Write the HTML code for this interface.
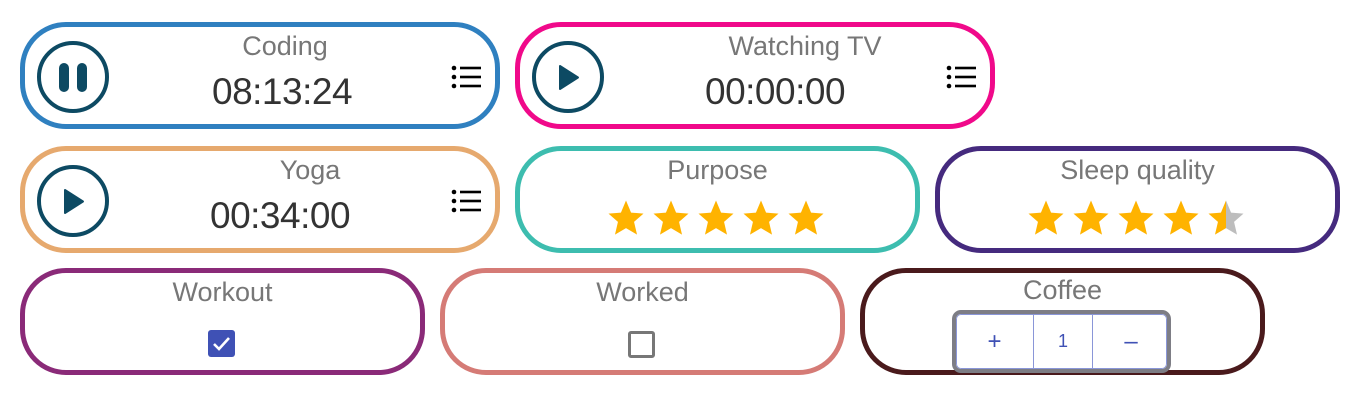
<!DOCTYPE html>
<html><head><style>
body{margin:0;width:1364px;height:412px;background:#fff;font-family:"Liberation Sans",sans-serif;position:relative;overflow:hidden}
.c{position:absolute;box-sizing:border-box;border:5px solid;border-radius:46px;height:107px}
.t{position:absolute;left:0;right:0;text-align:center;font-size:27px;color:#777;font-weight:300;top:4px}
.tm{position:absolute;font-size:37px;color:#333;top:44px;letter-spacing:-0.5px}
.btn{position:absolute;left:12px;top:14px;width:72px;height:72px;box-sizing:border-box;border:4px solid #0d4a63;border-radius:50%}
.li{position:absolute;right:13px;top:38px}
.st{position:absolute;left:0;right:0;top:46px;text-align:center}
</style></head><body>
<svg width="0" height="0" style="position:absolute"><defs>
<symbol id="star" viewBox="0 0 24 24"><path d="M12 2l2.9 6.9 7.1.6-5.4 4.7 1.7 7.3L12 17.8 5.7 21.5l1.7-7.3L2 9.5l7.1-.6z"/></symbol>
<symbol id="list" viewBox="0 0 30 24"><circle cx="3" cy="3" r="2.3"/><circle cx="3" cy="12" r="2.3"/><circle cx="3" cy="21" r="2.3"/><rect x="9" y="1.7" width="21" height="2.6"/><rect x="9" y="10.7" width="21" height="2.6"/><rect x="9" y="19.7" width="21" height="2.6"/></symbol>
<linearGradient id="hg" x1="0" x2="1" y1="0" y2="0"><stop offset="0.5" stop-color="#ffb300"/><stop offset="0.5" stop-color="#bdbdbd"/></linearGradient>
</defs></svg>

<div class="c" style="left:20px;top:22px;width:480px;border-color:#2f80c0">
 <div class="btn"><div style="position:absolute;left:18px;top:18px;width:10px;height:29px;background:#0d4a63;border-radius:5px"></div><div style="position:absolute;left:36px;top:18px;width:10px;height:29px;background:#0d4a63;border-radius:5px"></div></div>
 <div class="t" style="left:155px;right:0;width:210px;text-align:center">Coding</div>
 <div class="tm" style="left:187px">08:13:24</div>
 <svg class="li" width="32" height="24"><use href="#list"/></svg>
</div>

<div class="c" style="left:515px;top:22px;width:480px;border-color:#f0098a">
 <div class="btn"><svg style="position:absolute;left:22px;top:19px" width="22" height="27"><path d="M2 2L20 13.5 2 25z" fill="#0d4a63" stroke="#0d4a63" stroke-width="2" stroke-linejoin="round"/></svg></div>
 <div class="t" style="left:155px;width:260px">Watching TV</div>
 <div class="tm" style="left:185px">00:00:00</div>
 <svg class="li" width="32" height="24"><use href="#list"/></svg>
</div>

<div class="c" style="left:20px;top:146px;width:480px;border-color:#e6a96e">
 <div class="btn"><svg style="position:absolute;left:22px;top:19px" width="22" height="27"><path d="M2 2L20 13.5 2 25z" fill="#0d4a63" stroke="#0d4a63" stroke-width="2" stroke-linejoin="round"/></svg></div>
 <div class="t" style="left:155px;width:260px">Yoga</div>
 <div class="tm" style="left:185px">00:34:00</div>
 <svg class="li" width="32" height="24"><use href="#list"/></svg>
</div>

<div class="c" style="left:515px;top:146px;width:405px;border-color:#3dbdaf">
 <div class="t">Purpose</div>
 <div class="st"><svg width="225" height="42" fill="#ffb300"><use href="#star" x="0" width="42" height="42"/><use href="#star" x="45" width="42" height="42"/><use href="#star" x="90" width="42" height="42"/><use href="#star" x="135" width="42" height="42"/><use href="#star" x="180" width="42" height="42"/></svg></div>
</div>

<div class="c" style="left:935px;top:146px;width:405px;border-color:#452a7e">
 <div class="t">Sleep quality</div>
 <div class="st"><svg width="225" height="42"><g fill="#ffb300"><use href="#star" x="0" width="42" height="42"/><use href="#star" x="45" width="42" height="42"/><use href="#star" x="90" width="42" height="42"/><use href="#star" x="135" width="42" height="42"/></g><svg x="180" width="42" height="42" viewBox="0 0 24 24"><path d="M12 2l2.9 6.9 7.1.6-5.4 4.7 1.7 7.3L12 17.8 5.7 21.5l1.7-7.3L2 9.5l7.1-.6z" fill="url(#hg)"/></svg></svg></div>
</div>

<div class="c" style="left:20px;top:268px;width:405px;border-color:#8a2a78">
 <div class="t">Workout</div>
 <div style="position:absolute;left:183px;top:57px;width:27px;height:27px;background:#3f51b5;border-radius:3px"><svg width="27" height="27"><path d="M6 14l5 5 10-11" stroke="#fff" stroke-width="2.6" fill="none"/></svg></div>
</div>

<div class="c" style="left:440px;top:268px;width:405px;border-color:#d57b76">
 <div class="t">Worked</div>
 <div style="position:absolute;left:183px;top:58px;width:27px;height:27px;box-sizing:border-box;border:3px solid #777;border-radius:3px"></div>
</div>

<div class="c" style="left:860px;top:268px;width:405px;border-color:#4a1a1c">
 <div class="t" style="top:2px">Coffee</div>
 <div style="position:absolute;left:87px;top:37px;width:219px;height:63px;box-sizing:border-box;border:4px solid #7d7d85;border-radius:9px;overflow:hidden">
  <div style="position:absolute;inset:0;border:1px solid #8a96d8;border-radius:5px"></div>
  <div style="position:absolute;left:0;top:0;width:77px;height:55px;border-right:1px solid #8a96d8;text-align:center;line-height:55px;font-size:24px;color:#3f51b5">+</div>
  <div style="position:absolute;left:78px;top:0;width:58px;height:55px;border-right:1px solid #8a96d8;text-align:center;line-height:55px;font-size:18px;color:#3f51b5">1</div>
  <div style="position:absolute;left:137px;top:0;width:76px;height:55px;text-align:center;line-height:55px;font-size:24px;color:#3f51b5">&#8211;</div>
 </div>
</div>
</body></html>
